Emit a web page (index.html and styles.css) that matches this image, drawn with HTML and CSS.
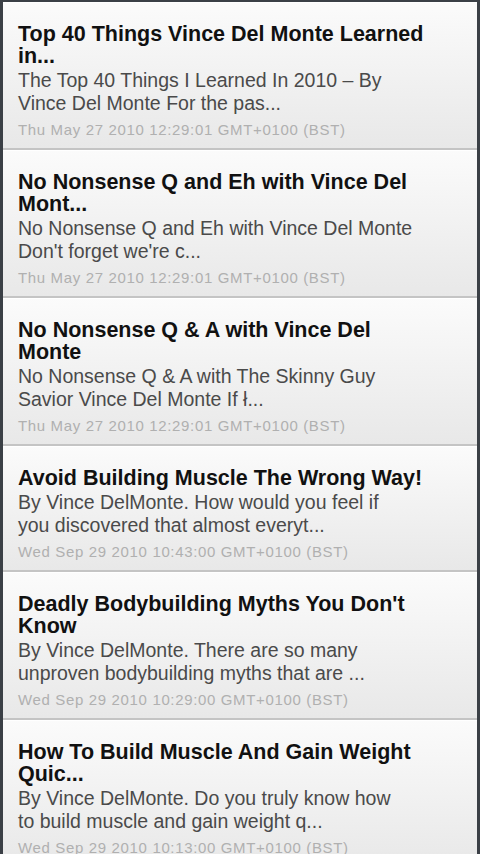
FILE: index.html
```html
<!DOCTYPE html>
<html lang="en">
<head>
  <meta charset="UTF-8" />
  <meta name="viewport" content="width=device-width, initial-scale=1.0"/>
  <title>Vince Del Monte Articles</title>
  <link rel="stylesheet" href="styles.css">
</head>
<body>

  <!-- Article list -->
  <ul class="feed">
    <li class="item">
      <h2>Top 40 Things Vince Del Monte Learned in...</h2>
      <p class="summary">The Top 40 Things I Learned In 2010 – By Vince Del Monte For the pas...</p>
      <p class="date">Thu May 27 2010 12:29:01 GMT+0100 (BST)</p>
    </li>
    <li class="item">
      <h2>No Nonsense Q and Eh with Vince Del Mont...</h2>
      <p class="summary">No Nonsense Q and Eh with Vince Del Monte Don't forget we're c...</p>
      <p class="date">Thu May 27 2010 12:29:01 GMT+0100 (BST)</p>
    </li>
    <li class="item">
      <h2>No Nonsense Q &amp; A with Vince Del Monte</h2>
      <p class="summary">No Nonsense Q &amp; A with The Skinny Guy Savior Vince Del Monte If ł...</p>
      <p class="date">Thu May 27 2010 12:29:01 GMT+0100 (BST)</p>
    </li>
    <li class="item">
      <h2>Avoid Building Muscle The Wrong Way!</h2>
      <p class="summary">By Vince DelMonte. How would you feel if you discovered that almost everyt...</p>
      <p class="date">Wed Sep 29 2010 10:43:00 GMT+0100 (BST)</p>
    </li>
    <li class="item">
      <h2>Deadly Bodybuilding Myths You Don't Know</h2>
      <p class="summary">By Vince DelMonte. There are so many unproven bodybuilding myths that are ...</p>
      <p class="date">Wed Sep 29 2010 10:29:00 GMT+0100 (BST)</p>
    </li>
    <li class="item">
      <h2>How To Build Muscle And Gain Weight Quic...</h2>
      <p class="summary">By Vince DelMonte. Do you truly know how<br>to build muscle and gain weight q...</p>
      <p class="date">Wed Sep 29 2010 10:13:00 GMT+0100 (BST)</p>
    </li>
  </ul>

</body>
</html>
```

FILE: styles.css
```css
body {
  margin: 0;
  font-family: 'Liberation Sans', Arial, sans-serif;
  background: #3b4046;
  overflow: hidden;
}

.feed {
  list-style: none;
  margin: 0;
  padding: 2px 3px 0 3px;
  height: 852px;
  overflow: hidden;
}

.item {
  padding: 21px 47px 8px 15px;
  background: linear-gradient(to bottom, #fbfbfb, #e8e8e8);
  border-bottom: 2px solid #c4c4c4;
  box-shadow: inset 0 1px 0 #ffffff;
}

.item h2 {
  margin: 0;
  font-size: 21.5px;
  line-height: 22px;
  font-weight: bold;
  color: #111;
}

.summary {
  margin: 2px 0 0 0;
  padding-right: 16px;
  font-size: 19.5px;
  line-height: 23px;
  color: #4a4a4a;
}

.date {
  margin: 5px 0 0 0;
  font-size: 15px;
  letter-spacing: 0.65px;
  line-height: 20px;
  color: #b0b0b0;
}
```
